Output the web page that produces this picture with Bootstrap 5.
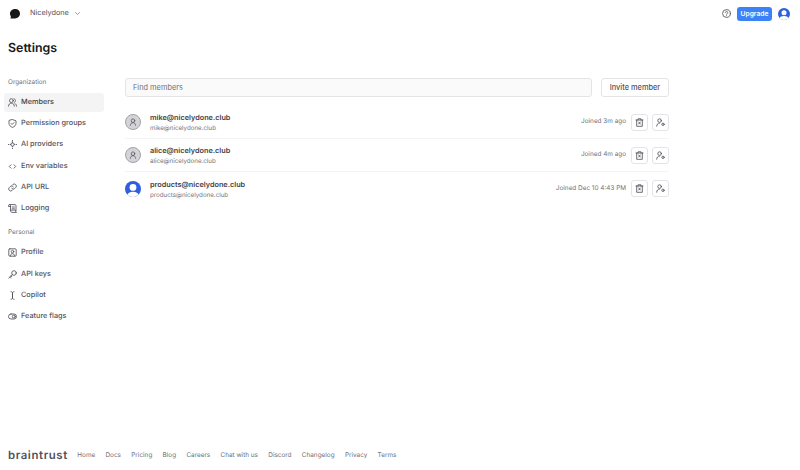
<!DOCTYPE html>
<html lang="en"><head><meta charset="utf-8"><title>Settings</title>
<link href="https://cdn.jsdelivr.net/npm/bootstrap@5.3.0/dist/css/bootstrap.min.css" rel="stylesheet">
<style>
html,body{height:470px;overflow:hidden}
body{font-family:Inter,"Liberation Sans",sans-serif;font-size:7.4px;color:#3f3f46;background:#fff;display:flex;flex-direction:column;text-rendering:geometricPrecision}
svg{display:block;flex:none}
.ic{width:9px;height:9px;fill:none;stroke:#52525b;stroke-width:.85;stroke-linecap:round;stroke-linejoin:round}
.chev{stroke:#71717a;stroke-width:.7}
.uava{margin-right:9px}
.topbar{height:27px;padding:0 10px 0 10px}
.org{color:#52525b;font-size:7.3px;margin-left:10px;margin-right:4px}
.upg{background:#3b82f6;color:#fff;font-size:6.7px;font-weight:600;height:14px;width:35px;padding:0;border-radius:3px;margin:0 6px 0 6px;line-height:14px;border:0}
.ttl{font-size:12.4px;font-weight:600;color:#18181b;margin:13px 0 0 8px;line-height:16px;height:16px}
.main{flex:1;padding-top:22px;min-height:0}
.side{width:104px;padding-left:4px}
.lbl{font-size:6.4px;color:#71717a;padding-left:4px;line-height:9px;height:9px;margin-bottom:6px}
.lbl2{margin-top:10.5px;margin-bottom:6px}
.item{height:19px;border-radius:3px;padding-left:4px;gap:4px;margin-bottom:2.2px;color:#52525b;font-size:7.3px;font-weight:500;text-decoration:none}
.item.on{background:#f4f4f5;color:#3f3f46}
.cont{width:544px;margin-left:21px}
.find{flex:1;height:19px;background:#fafafa;border:1px solid #e4e4e7;border-radius:3px;font-size:7.4px;padding:0 7px;color:#71717a}
.find::placeholder{color:#71717a;opacity:1}
.inv{width:68px;height:19px;margin-left:9px;padding:0;background:#fff;border:1px solid #e4e4e7;border-radius:3px;font-size:7.4px;font-weight:500;color:#52525b}
.rows{margin-top:9px}
.mrow{height:33.2px;border-bottom:1px solid #f4f4f5}
.mrow:last-child{border-bottom:0}
.ava{width:16px;height:16px;border-radius:50%;background:#d4d4d8;border:1px solid #a1a1aa;margin-right:9px}
.ava .ic{width:8px;height:8px}
.nm{font-size:7.3px;font-weight:600;color:#3f3f46;line-height:11px;padding-top:1px}
.sub{font-size:6.2px;color:#71717a;line-height:9px;margin-top:1px}
.jn{font-size:6.4px;color:#71717a;margin-right:4.5px}
.sq{width:17px;height:17px;padding:0;margin-left:4.5px;background:#fff;border:1px solid #e4e4e7;border-radius:3px}
.sq:first-of-type{margin-left:0}
.foot{height:27px;padding:0 8px 10px 8px;gap:10.3px}
.brand{font-family:Inter,sans-serif;font-size:11.4px;font-weight:600;color:#52525b;letter-spacing:.6px;width:59px;line-height:12px;margin-bottom:-1px}
.foot a{font-size:6.4px;color:#71717a;text-decoration:none;line-height:9px}
</style></head>
<body>
<header class="topbar d-flex align-items-center">
<svg width="10" height="10" viewBox="0 0 10 10"><path d="M5.400 0C8 0 10 2 10 4.600 10 7.400 7.800 9.400 5 9.400H.3C1 8.600 1 8 .6 7 .2 6.200 0 5.500 0 4.800 0 2 2.400 0 5.400 0Z" fill="#18181b"/></svg>
<span class="org">Nicelydone</span>
<svg class="ic chev" viewBox="0 0 9 9"><path d="M2.500 3.500 4.500 5.500l2-2"/></svg>
<div class="ms-auto d-flex align-items-center">
<svg class="ic" viewBox="0 0 9 9"><circle cx="4.500" cy="4.500" r="3.900"/><path d="M3.300 3.500c.1-.7.600-1.100 1.200-1.100.7 0 1.200.5 1.200 1.100 0 1-1.200 1-1.200 1.800M4.500 6.700v0"/></svg>
<button class="upg" type="button">Upgrade</button>
<svg width="12" height="12" viewBox="0 0 12 12"><defs><clipPath id="c0"><circle cx="6" cy="6" r="6"/></clipPath></defs><g clip-path="url(#c0)"><rect width="12" height="12" fill="#2f5fdf"/><circle cx="6" cy="4.800" r="2.500" fill="#fff"/><ellipse cx="6" cy="11.300" rx="4.500" ry="3.200" fill="#fff"/></g></svg>
</div>
</header>
<h1 class="ttl">Settings</h1>
<div class="main d-flex">
<nav class="side">
<div class="lbl">Organization</div>
<a class="item on d-flex align-items-center" href="#"><svg class="ic" viewBox="0 0 9 9"><circle cx="3.400" cy="2.600" r="1.900"/><path d="M.5 8.200c0-1.800 1.200-3 2.900-3s2.900 1.200 2.900 3M6 .8c1 .2 1.500 1 1.500 1.800S7 4.200 6.200 4.400M7 5.500c1 .5 1.500 1.500 1.500 2.700"/></svg>Members</a>
<a class="item d-flex align-items-center" href="#"><svg class="ic" viewBox="0 0 9 9"><path d="M4.500.6 8 1.800v2.500c0 2-1.500 3.400-3.500 4.100C2.500 7.700 1 6.300 1 4.300V1.800Z"/><path d="m3.100 4.500 1 1 1.800-1.900"/></svg>Permission groups</a>
<a class="item d-flex align-items-center" href="#"><svg class="ic" viewBox="0 0 9 9"><path d="M4.500 2 5.300 3.700 7 4.500 5.300 5.300 4.500 7 3.700 5.300 2 4.500 3.700 3.700Z"/><path d="M4.500.3V1M4.500 8V8.700M.3 4.500H1M8 4.500H8.700"/></svg>AI providers</a>
<a class="item d-flex align-items-center" href="#"><svg class="ic" viewBox="0 0 9 9"><path d="M3 2.800 1.300 4.500 3 6.200M6 2.800 7.700 4.500 6 6.200"/></svg>Env variables</a>
<a class="item d-flex align-items-center" href="#"><svg class="ic" viewBox="0 0 9 9"><path d="M3.700 5.300a2 2 0 0 0 3 .2l1-1a2 2 0 0 0-2.900-2.900l-.6.600"/><path d="M5.300 3.700a2 2 0 0 0-3-.2l-1 1a2 2 0 0 0 2.900 2.900l.6-.6"/></svg>API URL</a>
<a class="item d-flex align-items-center" href="#"><svg class="ic" viewBox="0 0 9 9"><path d="M2.500 6.500V1.500C2.500.9 2 .6 1.500.6S.5 1 .5 1.700V2.500H2.500M1.500.6H7c.5 0 1 .4 1 1V6.500M4.200 3h2.200M4.200 4.800h2.200M2.500 6.500c0 1 .5 1.900 1.500 1.900h4.500c-.7-.4-1-1-1-1.900Z"/></svg>Logging</a>
<div class="lbl lbl2">Personal</div>
<a class="item d-flex align-items-center" href="#"><svg class="ic" viewBox="0 0 9 9"><rect x=".8" y=".8" width="7.400" height="7.400" rx="1"/><circle cx="4.500" cy="3.600" r="1.300"/><path d="M2.400 8c0-1.500.9-2.300 2.100-2.300S6.600 6.500 6.600 8"/></svg>Profile</a>
<a class="item d-flex align-items-center" href="#"><svg class="ic" viewBox="0 0 9 9"><circle cx="6" cy="3" r="2.300"/><path d="M4.300 4.600.8 8.100M1.800 7.100l1 1M3 5.900l.9.900"/></svg>API keys</a>
<a class="item d-flex align-items-center" href="#"><svg class="ic" viewBox="0 0 9 9"><path d="M3 .7c.9 0 1.500.4 1.500 1.200v5.200c0 .8-.6 1.200-1.500 1.200M6 .7c-.9 0-1.500.4-1.500 1.200v5.200c0 .8.600 1.200 1.500 1.200"/></svg>Copilot</a>
<a class="item d-flex align-items-center" href="#"><svg class="ic" viewBox="0 0 9 9"><rect x=".5" y="2" width="8" height="5" rx="2.500"/><circle cx="5.800" cy="4.500" r="1.500"/></svg>Feature flags</a>
</nav>
<section class="cont">
<div class="d-flex">
<input class="find" type="text" placeholder="Find members">
<button class="inv" type="button">Invite member</button>
</div>
<div class="rows">
<div class="mrow d-flex align-items-center">
<div class="ava d-flex align-items-center justify-content-center"><svg class="ic" viewBox="0 0 9 9"><circle cx="4.500" cy="3" r="2"/><path d="M1.500 8.300c0-2 1.300-3 3-3s3 1 3 3"/></svg></div>
<div><div class="nm">mike@nicelydone.club</div><div class="sub">mike@nicelydone.club</div></div>
<div class="ms-auto d-flex align-items-center"><span class="jn">Joined 3m ago</span>
<button class="sq d-flex align-items-center justify-content-center" type="button" aria-label="Remove"><svg class="ic" viewBox="0 0 9 9"><path d="M1 2h7M3 2V.8h3V2M1.700 2v6.300h5.600V2M3.700 4l1.600 2M5.300 4 3.700 6"/></svg></button>
<button class="sq d-flex align-items-center justify-content-center" type="button" aria-label="Permissions"><svg class="ic" viewBox="0 0 9 9"><circle cx="3.600" cy="2.600" r="1.800"/><path d="M.7 8.200c0-1.800 1.100-3 2.700-3"/><circle cx="7" cy="6.300" r="1.200"/></svg></button></div>
</div>
<div class="mrow d-flex align-items-center">
<div class="ava d-flex align-items-center justify-content-center"><svg class="ic" viewBox="0 0 9 9"><circle cx="4.500" cy="3" r="2"/><path d="M1.500 8.300c0-2 1.300-3 3-3s3 1 3 3"/></svg></div>
<div><div class="nm">alice@nicelydone.club</div><div class="sub">alice@nicelydone.club</div></div>
<div class="ms-auto d-flex align-items-center"><span class="jn">Joined 4m ago</span>
<button class="sq d-flex align-items-center justify-content-center" type="button" aria-label="Remove"><svg class="ic" viewBox="0 0 9 9"><path d="M1 2h7M3 2V.8h3V2M1.700 2v6.300h5.600V2M3.700 4l1.600 2M5.300 4 3.700 6"/></svg></button>
<button class="sq d-flex align-items-center justify-content-center" type="button" aria-label="Permissions"><svg class="ic" viewBox="0 0 9 9"><circle cx="3.600" cy="2.600" r="1.800"/><path d="M.7 8.200c0-1.800 1.100-3 2.700-3"/><circle cx="7" cy="6.300" r="1.200"/></svg></button></div>
</div>
<div class="mrow d-flex align-items-center">
<svg class="uava" width="16" height="16" viewBox="0 0 16 16"><defs><clipPath id="c1"><circle cx="8" cy="8" r="8"/></clipPath></defs><g clip-path="url(#c1)"><rect width="16" height="16" fill="#2f5fdf"/><circle cx="8" cy="6.400" r="3.400" fill="#fff"/><ellipse cx="8" cy="15" rx="6" ry="4.200" fill="#fff"/></g></svg>
<div><div class="nm">products@nicelydone.club</div><div class="sub">products@nicelydone.club</div></div>
<div class="ms-auto d-flex align-items-center"><span class="jn">Joined Dec 10 4:43 PM</span>
<button class="sq d-flex align-items-center justify-content-center" type="button" aria-label="Remove"><svg class="ic" viewBox="0 0 9 9"><path d="M1 2h7M3 2V.8h3V2M1.700 2v6.300h5.600V2M3.700 4l1.600 2M5.300 4 3.700 6"/></svg></button>
<button class="sq d-flex align-items-center justify-content-center" type="button" aria-label="Permissions"><svg class="ic" viewBox="0 0 9 9"><circle cx="3.600" cy="2.600" r="1.800"/><path d="M.7 8.200c0-1.800 1.100-3 2.700-3"/><circle cx="7" cy="6.300" r="1.200"/></svg></button></div>
</div>
</div>
</section>
</div>
<footer class="foot d-flex align-items-end">
<span class="brand">braintrust</span>
<a href="#">Home</a><a href="#">Docs</a><a href="#">Pricing</a><a href="#">Blog</a><a href="#">Careers</a><a href="#">Chat with us</a><a href="#">Discord</a><a href="#">Changelog</a><a href="#">Privacy</a><a href="#">Terms</a>
</footer>
</body></html>
